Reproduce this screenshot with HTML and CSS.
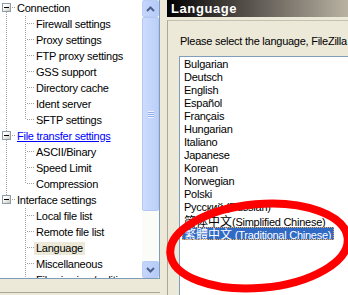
FILE: index.html
```html
<!DOCTYPE html>
<html lang="en">
<head>
    <meta charset="UTF-8">
    <title>FileZilla Settings - Language</title>
    <link rel="stylesheet" href="styles.css">
</head>
<body>
    <div class="window">
        <div class="sidebar">
            <div class="tree-box">
                <ul class="tree">
                    <li>
                        <div class="row root"><span class="expander"></span><span class="label">Connection</span></div>
                        <ul class="children">
                            <li class="row"><span class="label">Firewall settings</span></li>
                            <li class="row"><span class="label">Proxy settings</span></li>
                            <li class="row"><span class="label">FTP proxy settings</span></li>
                            <li class="row"><span class="label">GSS support</span></li>
                            <li class="row"><span class="label">Directory cache</span></li>
                            <li class="row"><span class="label">Ident server</span></li>
                            <li class="row"><span class="label">SFTP settings</span></li>
                        </ul>
                    </li>
                    <li>
                        <div class="row root"><span class="expander"></span><span class="label hot">File transfer settings</span></div>
                        <ul class="children">
                            <li class="row"><span class="label">ASCII/Binary</span></li>
                            <li class="row"><span class="label">Speed Limit</span></li>
                            <li class="row"><span class="label">Compression</span></li>
                        </ul>
                    </li>
                    <li>
                        <div class="row root"><span class="expander"></span><span class="label">Interface settings</span></div>
                        <ul class="children open-end">
                            <li class="row"><span class="label">Local file list</span></li>
                            <li class="row"><span class="label">Remote file list</span></li>
                            <li class="row"><span class="label selected">Language</span></li>
                            <li class="row"><span class="label">Miscellaneous</span></li>
                            <li class="row"><span class="label">File viewing / editing</span></li>
                        </ul>
                    </li>
                </ul>
                <div class="scrollbar">
                    <div class="sb-button">
                        <svg width="9" height="6" viewBox="0 0 9 6"><path d="M1 5 L4.5 1.5 L8 5" fill="none" stroke="#4d6185" stroke-width="2"/></svg>
                    </div>
                    <div class="sb-thumb">
                        <span class="grip"></span>
                    </div>
                    <div class="sb-track"></div>
                    <div class="sb-button">
                        <svg width="9" height="6" viewBox="0 0 9 6"><path d="M1 1 L4.5 4.5 L8 1" fill="none" stroke="#4d6185" stroke-width="2"/></svg>
                    </div>
                </div>
            </div>
            <div class="sidebar-next"></div>
        </div>

        <div class="page">
            <div class="page-title">Language</div>
            <div class="page-box">
                <p class="prompt">Please select the language, FileZilla should use:</p>
                <ul class="listbox">
                    <li>Bulgarian</li>
                    <li>Deutsch</li>
                    <li>English</li>
                    <li>Español</li>
                    <li>Français</li>
                    <li>Hungarian</li>
                    <li>Italiano</li>
                    <li>Japanese</li>
                    <li>Korean</li>
                    <li>Norwegian</li>
                    <li>Polski</li>
                    <li>Русский (Russian)</li>
                    <li><span class="cjk">简体中文</span>(Simplified Chinese)</li>
                    <li><span class="item-selected"><span class="cjk tc">繁體中文</span> (Traditional Chinese)</span></li>
                    <li></li>
                </ul>
            </div>
        </div>

        <!-- red marker drawn on top of the screenshot -->
        <svg class="marker" width="348" height="295" viewBox="0 0 348 295">
            <ellipse cx="259" cy="246" rx="89" ry="42" transform="rotate(-5 259 246)" fill="none" stroke="#ff0000" stroke-width="8"/>
        </svg>
    </div>
</body>
</html>
```

FILE: styles.css
```css
:root {
  --face: #ece9d8;
  --edge: #7f9db9;
  --dots: #a0a0a0;
  --select: #316ac5;
}

html, body {
  margin: 0;
  padding: 0;
  overflow: hidden;
}

body {
  background: var(--face);
  font-family: "Liberation Sans", "Noto Sans CJK SC", sans-serif;
  font-size: 11px;
  letter-spacing: -0.25px;
  color: #000;
}

.window {
  position: relative;
  display: flex;
  width: 348px;
  height: 295px;
  overflow: hidden;
}

/* left tree */
.sidebar {
  width: 160px;
  flex: none;
}

.tree-box {
  display: flex;
  height: 278px;
  border-right: 1px solid var(--edge);
  border-bottom: 1px solid var(--edge);
  background: #fff;
}

.tree {
  flex: 1;
  list-style: none;
  margin: 0;
  padding: 0;
  overflow: hidden;
  background: repeating-linear-gradient(to bottom, var(--dots) 0 1px, transparent 1px 2px) 6px 12px / 1px 183px no-repeat;
}

.tree ul {
  list-style: none;
  margin: 0;
  padding: 0;
}

.row {
  display: flex;
  align-items: center;
  height: 16px;
  white-space: nowrap;
}

.root {
  padding-left: 2px;
  background: repeating-linear-gradient(to right, var(--dots) 0 1px, transparent 1px 2px) 12px 7px / 4px 1px no-repeat;
}

.expander {
  position: relative;
  width: 7px;
  height: 7px;
  margin-right: 4px;
  margin-top: -2px;
  border: 1px solid #8a9db1;
  background: linear-gradient(135deg, #fff 30%, #c9c5b6);
}

.expander::after {
  content: "";
  position: absolute;
  left: 1px;
  top: 3px;
  width: 5px;
  height: 1px;
  background: #000;
}

.label {
  padding: 0 2px;
  line-height: 13px;
}

.hot {
  color: #0000ff;
  text-decoration: underline;
}

.selected {
  background: var(--face);
}

.children {
  background: repeating-linear-gradient(to bottom, var(--dots) 0 1px, transparent 1px 2px) 25px 0 / 1px calc(100% - 8px) no-repeat;
}

.children.open-end {
  background-size: 1px 100%;
}

.children .row {
  padding-left: 34px;
  background-image:
    repeating-linear-gradient(to bottom, var(--dots) 0 1px, transparent 1px 2px),
    repeating-linear-gradient(to right, var(--dots) 0 1px, transparent 1px 2px);
  background-position: 25px 0, 27px 7px;
  background-size: 1px 0, 7px 1px;
  background-repeat: no-repeat;
}

/* scrollbar */
.scrollbar {
  display: flex;
  flex-direction: column;
  width: 17px;
  flex: none;
  background: #fbfbf8;
}

.sb-button {
  display: flex;
  align-items: center;
  justify-content: center;
  height: 15px;
  border: 1px solid #bccdf5;
  border-radius: 2px;
  background: linear-gradient(to right, #c5d6fc, #b6cbf9);
}

.sb-thumb {
  display: flex;
  align-items: center;
  justify-content: center;
  height: 192px;
  border: 1px solid #b3c7f3;
  border-radius: 2px;
  background: linear-gradient(to right, #cddcfd, #bccff9);
}

.grip {
  width: 6px;
  height: 7px;
  background: repeating-linear-gradient(to bottom, #eef3fe 0 1px, #8eaaf0 1px 2px);
}

.sb-track {
  flex: 1;
}

.sidebar-next {
  margin-top: 13px;
  height: 10px;
  border-top: 1px solid #aca899;
  background: var(--face);
}

/* right page */
.page {
  flex: 1;
  margin-left: 7px;
  min-width: 0;
}

.page-title {
  height: 17px;
  line-height: 17px;
  padding-left: 4px;
  background: linear-gradient(to right, #000 0%, #332f2c 25%, #b9b2a3 100%);
  color: #fff;
  font-size: 13px;
  font-weight: bold;
  letter-spacing: 0.6px;
  white-space: nowrap;
}

.page-box {
  margin-top: 3px;
  height: 300px;
  border-top: 1px solid #c4c0b2;
  border-left: 1px solid #aca899;
  padding-left: 11px;
}

.prompt {
  margin: 14px 0 0 1px;
  line-height: 13px;
  white-space: nowrap;
}

.listbox {
  list-style: none;
  margin: 8px 0 0;
  padding: 1px 0 0 2px;
  width: 300px;
  height: 260px;
  border: 1px solid var(--edge);
  background: #fff;
}

.listbox li {
  height: 13px;
  line-height: 13px;
  white-space: nowrap;
  padding-left: 2px;
}

.cjk {
  font-family: "Noto Sans CJK SC", sans-serif;
  font-size: 12px;
  line-height: 13px;
  letter-spacing: 0;
}

.cjk.tc {
  font-family: "Noto Sans CJK TC", sans-serif;
}

.item-selected {
  display: inline-block;
  margin-left: -2px;
  padding: 0 3px 0 2px;
  height: 13px;
  background: var(--select);
  color: #fff;
  outline: 1px dotted #e8a64a;
  outline-offset: -1px;
}

.marker {
  position: absolute;
  left: 0;
  top: 0;
  pointer-events: none;
}
```
